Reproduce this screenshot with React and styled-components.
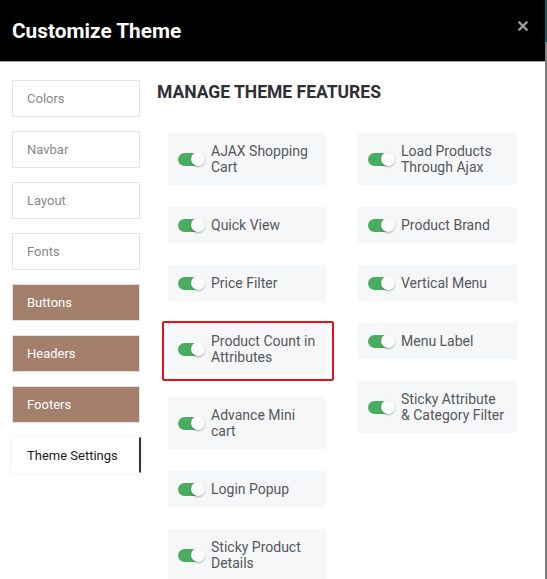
import React from "react";
import styled, { createGlobalStyle } from "styled-components";

const Global = createGlobalStyle`
  html, body { margin: 0; padding: 0; }
  body {
    width: 547px; height: 579px; overflow: hidden;
    background: #7a7a7a;
    font-family: Roboto, "Liberation Sans", Arial, sans-serif;
  }
  #root { height: 579px; }
`;

const Page = styled.div`
  display: flex;
  height: 579px;
`;

const Modal = styled.div`
  width: 545px;
  height: 579px;
  background: #fff;
  overflow: hidden;
  display: flex;
  flex-direction: column;
`;

const Edge = styled.div`
  width: 2px;
  background: linear-gradient(to bottom, #1d5b56 0, #1d5b56 42px, #808080 42px, #808080 100%);
`;

const Header = styled.div`
  height: 61px;
  flex: none;
  background: #000;
  border-bottom: 1px solid #a2a2a2;
  display: flex;
  align-items: center;
  justify-content: space-between;
  padding: 0 17px 0 12px;
`;

const Title = styled.h1`
  margin: 0;
  color: #fff;
  font-size: 20.8px;
  font-weight: 700;
`;

const Close = styled.button`
  border: 0;
  background: none;
  padding: 0;
  width: 10px;
  height: 10px;
  display: flex;
  margin-top: -10px;
  cursor: pointer;
`;

const Body = styled.div`
  display: flex;
  padding: 18px 0 0 12px;
`;

const Sidebar = styled.nav`
  width: 128px;
  flex: none;
  display: flex;
  flex-direction: column;
  gap: 14px;
`;

const NavItem = styled.div`
  height: 37px;
  box-sizing: border-box;
  display: flex;
  align-items: center;
  padding-left: 14px;
  font-size: 13px;
  border: 1px solid ${(p) => (p.$variant === "active" ? "transparent" : "#e4e4e4")};
  color: ${(p) =>
    p.$variant === "brown" ? "#fff" : p.$variant === "active" ? "#1d1d1d" : "#8a8a8a"};
  background: ${(p) => (p.$variant === "brown" ? "#a47f6c" : "#fff")};
  ${(p) =>
    p.$variant === "active" &&
    `
    height: 36px;
    border-right: 2px solid #333;
    box-shadow: 0 0 6px rgba(0,0,0,0.08);
    width: 129px;
  `}
`;

const Main = styled.section`
  margin-left: 17px;
  flex: 1;
`;

const Heading = styled.h2`
  margin: 2px 0 0;
  font-size: 17.5px;
  line-height: 20px;
  font-weight: 700;
  color: #2f2f36;
  text-transform: uppercase;
`;

const Columns = styled.div`
  display: flex;
  gap: 32px;
  margin: 31px 0 0 11px;
  align-items: flex-start;
`;

const Column = styled.div`
  width: ${(p) => p.$w}px;
  display: flex;
  flex-direction: column;
  gap: 22px;
`;

const Card = styled.div`
  position: relative;
  background: #f6f7f9;
  display: flex;
  align-items: center;
  padding: 10px 10px 10px 10px;
  gap: 6px;
  ${(p) =>
    p.$highlight &&
    `
    &::after {
      content: "";
      position: absolute;
      top: -2px; bottom: -6px; left: -6px; right: -8px;
      border: 2px solid #e8101a;
      border-radius: 2px;
      pointer-events: none;
    }
  `}
`;

const Toggle = styled.span`
  position: relative;
  flex: none;
  width: 27px;
  height: 15px;
  &::before {
    content: "";
    position: absolute;
    left: 0; top: 1px;
    width: 25px; height: 13px;
    border-radius: 7px;
    background: #48ad5e;
  }
  &::after {
    content: "";
    position: absolute;
    right: 0; top: 0;
    width: 14px; height: 14px;
    border-radius: 50%;
    background: #fbfbfb;
    box-shadow: 0 1px 2px rgba(0,0,0,0.3);
  }
`;

const Label = styled.span`
  font-size: 14px;
  line-height: 16px;
  color: #55575c;
`;

const nav = [
  ["Colors", "plain"],
  ["Navbar", "plain"],
  ["Layout", "plain"],
  ["Fonts", "plain"],
  ["Buttons", "brown"],
  ["Headers", "brown"],
  ["Footers", "brown"],
  ["Theme Settings", "active"],
];

const col1 = [
  "AJAX Shopping Cart",
  "Quick View",
  "Price Filter",
  "Product Count in Attributes",
  "Advance Mini cart",
  "Login Popup",
  "Sticky Product Details",
];
const col2 = [
  "Load Products Through Ajax",
  "Product Brand",
  "Vertical Menu",
  "Menu Label",
  "Sticky Attribute & Category Filter",
];

function Feature({ label, highlight }) {
  return (
    <Card $highlight={highlight}>
      <Toggle />
      <Label>{label}</Label>
    </Card>
  );
}

export default function App() {
  return (
    <>
      <Global />
      <Page>
        <Modal>
          <Header>
            <Title>Customize Theme</Title>
            <Close aria-label="close">
              <svg width="10" height="10" viewBox="0 0 10 10">
                <path d="M1.5 1.5 L8.5 8.5 M8.5 1.5 L1.5 8.5" stroke="#9c9c9c" strokeWidth="2.4" strokeLinecap="square" />
              </svg>
            </Close>
          </Header>
          <Body>
            <Sidebar>
              {nav.map(([t, v]) => (
                <NavItem key={t} $variant={v}>{t}</NavItem>
              ))}
            </Sidebar>
            <Main>
              <Heading>Manage Theme Features</Heading>
              <Columns>
                <Column $w={158}>
                  {col1.map((l) => (
                    <Feature key={l} label={l} highlight={l.startsWith("Product Count")} />
                  ))}
                </Column>
                <Column $w={159}>
                  {col2.map((l) => (
                    <Feature key={l} label={l} />
                  ))}
                </Column>
              </Columns>
            </Main>
          </Body>
        </Modal>
        <Edge />
      </Page>
    </>
  );
}
